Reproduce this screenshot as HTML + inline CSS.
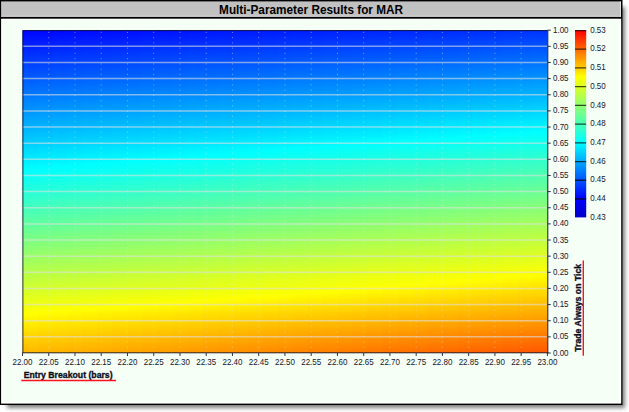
<!DOCTYPE html>
<html><head><meta charset="utf-8"><title>Multi-Parameter Results for MAR</title>
<style>
html,body{margin:0;padding:0;background:#fff;}
body{width:629px;height:412px;overflow:hidden;position:relative;font-family:"Liberation Sans",sans-serif;}
#win{position:absolute;left:0;top:0;width:622px;height:405px;background:#000;box-shadow:5px 5px 4px -2px rgba(0,0,0,0.5);}
svg{position:absolute;left:0;top:0;}
text{font-family:"Liberation Sans",sans-serif;}
</style></head><body>
<div id="win"></div>
<svg width="629" height="412" viewBox="0 0 629 412">
<defs>
<linearGradient id="c0" x1="0" y1="0" x2="0" y2="1"><stop offset="0.0000" stop-color="#0005ff"/><stop offset="0.3150" stop-color="#00bbff"/><stop offset="0.4330" stop-color="#00ffff"/><stop offset="0.4350" stop-color="#01fffe"/><stop offset="0.7550" stop-color="#b9ff46"/><stop offset="0.8775" stop-color="#ffff00"/><stop offset="0.8790" stop-color="#fffe00"/><stop offset="1.0000" stop-color="#ffb600"/></linearGradient>
<linearGradient id="c1" x1="0" y1="0" x2="0" y2="1"><stop offset="0.0000" stop-color="#0006ff"/><stop offset="0.3150" stop-color="#00bdff"/><stop offset="0.4290" stop-color="#00ffff"/><stop offset="0.4350" stop-color="#03fffc"/><stop offset="0.7550" stop-color="#bbff44"/><stop offset="0.8744" stop-color="#ffff00"/><stop offset="0.8790" stop-color="#fffb00"/><stop offset="1.0000" stop-color="#ffb300"/></linearGradient>
<linearGradient id="c2" x1="0" y1="0" x2="0" y2="1"><stop offset="0.0000" stop-color="#0008ff"/><stop offset="0.3150" stop-color="#00bfff"/><stop offset="0.4251" stop-color="#00ffff"/><stop offset="0.4350" stop-color="#05fffa"/><stop offset="0.7550" stop-color="#bdff42"/><stop offset="0.8713" stop-color="#ffff00"/><stop offset="0.8790" stop-color="#fff900"/><stop offset="1.0000" stop-color="#ffb100"/></linearGradient>
<linearGradient id="c3" x1="0" y1="0" x2="0" y2="1"><stop offset="0.0000" stop-color="#0009ff"/><stop offset="0.3150" stop-color="#00c1ff"/><stop offset="0.4212" stop-color="#00ffff"/><stop offset="0.4350" stop-color="#07fff8"/><stop offset="0.7550" stop-color="#bfff40"/><stop offset="0.8681" stop-color="#ffff00"/><stop offset="0.8790" stop-color="#fff600"/><stop offset="1.0000" stop-color="#ffae00"/></linearGradient>
<linearGradient id="c4" x1="0" y1="0" x2="0" y2="1"><stop offset="0.0000" stop-color="#000aff"/><stop offset="0.3150" stop-color="#00c3ff"/><stop offset="0.4173" stop-color="#00ffff"/><stop offset="0.4350" stop-color="#09fff6"/><stop offset="0.7550" stop-color="#c1ff3e"/><stop offset="0.8650" stop-color="#ffff00"/><stop offset="0.8790" stop-color="#fff400"/><stop offset="1.0000" stop-color="#ffab00"/></linearGradient>
<linearGradient id="c5" x1="0" y1="0" x2="0" y2="1"><stop offset="0.0000" stop-color="#000cff"/><stop offset="0.3150" stop-color="#00c5ff"/><stop offset="0.4135" stop-color="#00ffff"/><stop offset="0.4350" stop-color="#0bfff4"/><stop offset="0.7550" stop-color="#c3ff3c"/><stop offset="0.8618" stop-color="#ffff00"/><stop offset="0.8790" stop-color="#fff100"/><stop offset="1.0000" stop-color="#ffa800"/></linearGradient>
<linearGradient id="c6" x1="0" y1="0" x2="0" y2="1"><stop offset="0.0000" stop-color="#000dff"/><stop offset="0.3150" stop-color="#00c7ff"/><stop offset="0.4097" stop-color="#00ffff"/><stop offset="0.4350" stop-color="#0dfff2"/><stop offset="0.7550" stop-color="#c5ff3a"/><stop offset="0.8586" stop-color="#ffff00"/><stop offset="0.8790" stop-color="#ffef00"/><stop offset="1.0000" stop-color="#ffa500"/></linearGradient>
<linearGradient id="c7" x1="0" y1="0" x2="0" y2="1"><stop offset="0.0000" stop-color="#000eff"/><stop offset="0.3150" stop-color="#00c9ff"/><stop offset="0.4059" stop-color="#00ffff"/><stop offset="0.4350" stop-color="#0ffff0"/><stop offset="0.7550" stop-color="#c7ff38"/><stop offset="0.8553" stop-color="#ffff00"/><stop offset="0.8790" stop-color="#ffed00"/><stop offset="1.0000" stop-color="#ffa200"/></linearGradient>
<linearGradient id="c8" x1="0" y1="0" x2="0" y2="1"><stop offset="0.0000" stop-color="#0010ff"/><stop offset="0.3150" stop-color="#00cbff"/><stop offset="0.4022" stop-color="#00ffff"/><stop offset="0.4350" stop-color="#11ffee"/><stop offset="0.7550" stop-color="#c9ff36"/><stop offset="0.8521" stop-color="#ffff00"/><stop offset="0.8790" stop-color="#ffea00"/><stop offset="1.0000" stop-color="#ffa000"/></linearGradient>
<linearGradient id="c9" x1="0" y1="0" x2="0" y2="1"><stop offset="0.0000" stop-color="#0011ff"/><stop offset="0.3150" stop-color="#00cdff"/><stop offset="0.3985" stop-color="#00ffff"/><stop offset="0.4350" stop-color="#13ffec"/><stop offset="0.7550" stop-color="#cbff34"/><stop offset="0.8488" stop-color="#ffff00"/><stop offset="0.8790" stop-color="#ffe800"/><stop offset="1.0000" stop-color="#ff9d00"/></linearGradient>
<linearGradient id="c10" x1="0" y1="0" x2="0" y2="1"><stop offset="0.0000" stop-color="#0012ff"/><stop offset="0.3150" stop-color="#00cfff"/><stop offset="0.3949" stop-color="#00ffff"/><stop offset="0.4350" stop-color="#15ffea"/><stop offset="0.7550" stop-color="#cdff32"/><stop offset="0.8455" stop-color="#ffff00"/><stop offset="0.8790" stop-color="#ffe500"/><stop offset="1.0000" stop-color="#ff9a00"/></linearGradient>
<linearGradient id="c11" x1="0" y1="0" x2="0" y2="1"><stop offset="0.0000" stop-color="#0014ff"/><stop offset="0.3150" stop-color="#00d1ff"/><stop offset="0.3912" stop-color="#00ffff"/><stop offset="0.4350" stop-color="#17ffe8"/><stop offset="0.7550" stop-color="#cfff30"/><stop offset="0.8421" stop-color="#ffff00"/><stop offset="0.8790" stop-color="#ffe300"/><stop offset="1.0000" stop-color="#ff9700"/></linearGradient>
<linearGradient id="c12" x1="0" y1="0" x2="0" y2="1"><stop offset="0.0000" stop-color="#0015ff"/><stop offset="0.3150" stop-color="#00d3ff"/><stop offset="0.3877" stop-color="#00ffff"/><stop offset="0.4350" stop-color="#19ffe6"/><stop offset="0.7550" stop-color="#d1ff2e"/><stop offset="0.8388" stop-color="#ffff00"/><stop offset="0.8790" stop-color="#ffe000"/><stop offset="1.0000" stop-color="#ff9400"/></linearGradient>
<linearGradient id="c13" x1="0" y1="0" x2="0" y2="1"><stop offset="0.0000" stop-color="#0016ff"/><stop offset="0.3150" stop-color="#00d5ff"/><stop offset="0.3841" stop-color="#00ffff"/><stop offset="0.4350" stop-color="#1bffe4"/><stop offset="0.7550" stop-color="#d3ff2c"/><stop offset="0.8354" stop-color="#ffff00"/><stop offset="0.8790" stop-color="#ffde00"/><stop offset="1.0000" stop-color="#ff9100"/></linearGradient>
<linearGradient id="c14" x1="0" y1="0" x2="0" y2="1"><stop offset="0.0000" stop-color="#0018ff"/><stop offset="0.3150" stop-color="#00d6ff"/><stop offset="0.3806" stop-color="#00ffff"/><stop offset="0.4350" stop-color="#1dffe2"/><stop offset="0.7550" stop-color="#d5ff2a"/><stop offset="0.8319" stop-color="#ffff00"/><stop offset="0.8790" stop-color="#ffdb00"/><stop offset="1.0000" stop-color="#ff8f00"/></linearGradient>
<linearGradient id="c15" x1="0" y1="0" x2="0" y2="1"><stop offset="0.0000" stop-color="#0019ff"/><stop offset="0.3150" stop-color="#00d8ff"/><stop offset="0.3771" stop-color="#00ffff"/><stop offset="0.4350" stop-color="#1fffe0"/><stop offset="0.7550" stop-color="#d7ff28"/><stop offset="0.8285" stop-color="#ffff00"/><stop offset="0.8790" stop-color="#ffd900"/><stop offset="1.0000" stop-color="#ff8c00"/></linearGradient>
<linearGradient id="c16" x1="0" y1="0" x2="0" y2="1"><stop offset="0.0000" stop-color="#001aff"/><stop offset="0.3150" stop-color="#00daff"/><stop offset="0.3736" stop-color="#00ffff"/><stop offset="0.4350" stop-color="#21ffde"/><stop offset="0.7550" stop-color="#d9ff26"/><stop offset="0.8250" stop-color="#ffff00"/><stop offset="0.8790" stop-color="#ffd600"/><stop offset="1.0000" stop-color="#ff8900"/></linearGradient>
<linearGradient id="c17" x1="0" y1="0" x2="0" y2="1"><stop offset="0.0000" stop-color="#001cff"/><stop offset="0.3150" stop-color="#00dcff"/><stop offset="0.3702" stop-color="#00ffff"/><stop offset="0.4350" stop-color="#23ffdc"/><stop offset="0.7550" stop-color="#dbff24"/><stop offset="0.8215" stop-color="#ffff00"/><stop offset="0.8790" stop-color="#ffd400"/><stop offset="1.0000" stop-color="#ff8600"/></linearGradient>
<linearGradient id="c18" x1="0" y1="0" x2="0" y2="1"><stop offset="0.0000" stop-color="#001dff"/><stop offset="0.3150" stop-color="#00deff"/><stop offset="0.3668" stop-color="#00ffff"/><stop offset="0.4350" stop-color="#25ffda"/><stop offset="0.7550" stop-color="#ddff22"/><stop offset="0.8180" stop-color="#ffff00"/><stop offset="0.8790" stop-color="#ffd100"/><stop offset="1.0000" stop-color="#ff8300"/></linearGradient>
<linearGradient id="c19" x1="0" y1="0" x2="0" y2="1"><stop offset="0.0000" stop-color="#001eff"/><stop offset="0.3150" stop-color="#00e0ff"/><stop offset="0.3635" stop-color="#00ffff"/><stop offset="0.4350" stop-color="#27ffd8"/><stop offset="0.7550" stop-color="#dfff20"/><stop offset="0.8144" stop-color="#ffff00"/><stop offset="0.8790" stop-color="#ffcf00"/><stop offset="1.0000" stop-color="#ff8000"/></linearGradient>
<linearGradient id="c20" x1="0" y1="0" x2="0" y2="1"><stop offset="0.0000" stop-color="#0020ff"/><stop offset="0.3150" stop-color="#00e2ff"/><stop offset="0.3601" stop-color="#00ffff"/><stop offset="0.4350" stop-color="#29ffd6"/><stop offset="0.7550" stop-color="#e1ff1e"/><stop offset="0.8108" stop-color="#ffff00"/><stop offset="0.8790" stop-color="#ffcd00"/><stop offset="1.0000" stop-color="#ff7e00"/></linearGradient>
<linearGradient id="c21" x1="0" y1="0" x2="0" y2="1"><stop offset="0.0000" stop-color="#0021ff"/><stop offset="0.3150" stop-color="#00e4ff"/><stop offset="0.3568" stop-color="#00ffff"/><stop offset="0.4350" stop-color="#2bffd4"/><stop offset="0.7550" stop-color="#e4ff1b"/><stop offset="0.8072" stop-color="#ffff00"/><stop offset="0.8790" stop-color="#ffca00"/><stop offset="1.0000" stop-color="#ff7b00"/></linearGradient>
<linearGradient id="c22" x1="0" y1="0" x2="0" y2="1"><stop offset="0.0000" stop-color="#0022ff"/><stop offset="0.3150" stop-color="#00e6ff"/><stop offset="0.3536" stop-color="#00ffff"/><stop offset="0.4350" stop-color="#2dffd2"/><stop offset="0.7550" stop-color="#e6ff19"/><stop offset="0.8035" stop-color="#ffff00"/><stop offset="0.8790" stop-color="#ffc800"/><stop offset="1.0000" stop-color="#ff7800"/></linearGradient>
<linearGradient id="c23" x1="0" y1="0" x2="0" y2="1"><stop offset="0.0000" stop-color="#0024ff"/><stop offset="0.3150" stop-color="#00e8ff"/><stop offset="0.3503" stop-color="#00ffff"/><stop offset="0.4350" stop-color="#2fffd0"/><stop offset="0.7550" stop-color="#e8ff17"/><stop offset="0.7998" stop-color="#ffff00"/><stop offset="0.8790" stop-color="#ffc500"/><stop offset="1.0000" stop-color="#ff7500"/></linearGradient>
<linearGradient id="c24" x1="0" y1="0" x2="0" y2="1"><stop offset="0.0000" stop-color="#0025ff"/><stop offset="0.3150" stop-color="#00eaff"/><stop offset="0.3471" stop-color="#00ffff"/><stop offset="0.4350" stop-color="#31ffce"/><stop offset="0.7550" stop-color="#eaff15"/><stop offset="0.7961" stop-color="#ffff00"/><stop offset="0.8790" stop-color="#ffc300"/><stop offset="1.0000" stop-color="#ff7200"/></linearGradient>
<linearGradient id="c25" x1="0" y1="0" x2="0" y2="1"><stop offset="0.0000" stop-color="#0026ff"/><stop offset="0.3150" stop-color="#00ecff"/><stop offset="0.3439" stop-color="#00ffff"/><stop offset="0.4350" stop-color="#33ffcc"/><stop offset="0.7550" stop-color="#ecff13"/><stop offset="0.7923" stop-color="#ffff00"/><stop offset="0.8790" stop-color="#ffc000"/><stop offset="1.0000" stop-color="#ff7000"/></linearGradient>
<linearGradient id="c26" x1="0" y1="0" x2="0" y2="1"><stop offset="0.0000" stop-color="#0028ff"/><stop offset="0.3150" stop-color="#00eeff"/><stop offset="0.3408" stop-color="#00ffff"/><stop offset="0.4350" stop-color="#35ffca"/><stop offset="0.7550" stop-color="#eeff11"/><stop offset="0.7886" stop-color="#ffff00"/><stop offset="0.8790" stop-color="#ffbe00"/><stop offset="1.0000" stop-color="#ff6d00"/></linearGradient>
<linearGradient id="c27" x1="0" y1="0" x2="0" y2="1"><stop offset="0.0000" stop-color="#0029ff"/><stop offset="0.3150" stop-color="#00f0ff"/><stop offset="0.3376" stop-color="#00ffff"/><stop offset="0.4350" stop-color="#37ffc8"/><stop offset="0.7550" stop-color="#f0ff0f"/><stop offset="0.7847" stop-color="#ffff00"/><stop offset="0.8790" stop-color="#ffbb00"/><stop offset="1.0000" stop-color="#ff6a00"/></linearGradient>
<linearGradient id="c28" x1="0" y1="0" x2="0" y2="1"><stop offset="0.0000" stop-color="#002aff"/><stop offset="0.3150" stop-color="#00f2ff"/><stop offset="0.3345" stop-color="#00ffff"/><stop offset="0.4350" stop-color="#39ffc6"/><stop offset="0.7550" stop-color="#f2ff0d"/><stop offset="0.7809" stop-color="#ffff00"/><stop offset="0.8790" stop-color="#ffb900"/><stop offset="1.0000" stop-color="#ff6700"/></linearGradient>
<linearGradient id="c29" x1="0" y1="0" x2="0" y2="1"><stop offset="0.0000" stop-color="#002cff"/><stop offset="0.3150" stop-color="#00f4ff"/><stop offset="0.3315" stop-color="#00ffff"/><stop offset="0.4350" stop-color="#3bffc4"/><stop offset="0.7550" stop-color="#f4ff0b"/><stop offset="0.7770" stop-color="#ffff00"/><stop offset="0.8790" stop-color="#ffb600"/><stop offset="1.0000" stop-color="#ff6400"/></linearGradient>
<linearGradient id="c30" x1="0" y1="0" x2="0" y2="1"><stop offset="0.0000" stop-color="#002dff"/><stop offset="0.3150" stop-color="#00f6ff"/><stop offset="0.3284" stop-color="#00ffff"/><stop offset="0.4350" stop-color="#3dffc2"/><stop offset="0.7550" stop-color="#f6ff09"/><stop offset="0.7731" stop-color="#ffff00"/><stop offset="0.8790" stop-color="#ffb400"/><stop offset="1.0000" stop-color="#ff6100"/></linearGradient>
<linearGradient id="c31" x1="0" y1="0" x2="0" y2="1"><stop offset="0.0000" stop-color="#002eff"/><stop offset="0.3150" stop-color="#00f8ff"/><stop offset="0.3254" stop-color="#00ffff"/><stop offset="0.4350" stop-color="#3fffc0"/><stop offset="0.7550" stop-color="#f8ff07"/><stop offset="0.7691" stop-color="#ffff00"/><stop offset="0.8790" stop-color="#ffb100"/><stop offset="1.0000" stop-color="#ff5f00"/></linearGradient>
<linearGradient id="c32" x1="0" y1="0" x2="0" y2="1"><stop offset="0.0000" stop-color="#0030ff"/><stop offset="0.3150" stop-color="#00faff"/><stop offset="0.3224" stop-color="#00ffff"/><stop offset="0.4350" stop-color="#41ffbe"/><stop offset="0.7550" stop-color="#faff05"/><stop offset="0.7651" stop-color="#ffff00"/><stop offset="0.8790" stop-color="#ffaf00"/><stop offset="1.0000" stop-color="#ff5c00"/></linearGradient>
<linearGradient id="c33" x1="0" y1="0" x2="0" y2="1"><stop offset="0.0000" stop-color="#0031ff"/><stop offset="0.3150" stop-color="#00fcff"/><stop offset="0.3194" stop-color="#00ffff"/><stop offset="0.4350" stop-color="#43ffbc"/><stop offset="0.7550" stop-color="#fcff03"/><stop offset="0.7611" stop-color="#ffff00"/><stop offset="0.8790" stop-color="#ffac00"/><stop offset="1.0000" stop-color="#ff5900"/></linearGradient>
<linearGradient id="c34" x1="0" y1="0" x2="0" y2="1"><stop offset="0.0000" stop-color="#0032ff"/><stop offset="0.3150" stop-color="#00feff"/><stop offset="0.3165" stop-color="#00ffff"/><stop offset="0.4350" stop-color="#45ffba"/><stop offset="0.7550" stop-color="#feff01"/><stop offset="0.7570" stop-color="#ffff00"/><stop offset="0.8790" stop-color="#ffaa00"/><stop offset="1.0000" stop-color="#ff5600"/></linearGradient>
<linearGradient id="gc" x1="0" y1="0" x2="0" y2="1"><stop offset="0.000" stop-color="#ff0000"/><stop offset="0.250" stop-color="#ffff00"/><stop offset="0.600" stop-color="#00ffff"/><stop offset="0.900" stop-color="#0000ff"/><stop offset="1.000" stop-color="#0000c8"/></linearGradient>
</defs>
<rect x="0" y="0" width="622.5" height="405" fill="#000"/>
<rect x="1.1" y="1.4" width="619.9" height="15.4" fill="#c1c1c1"/>
<path d="M1.1 16.3H620.9M620.5 1.4V16.8" stroke="#fff" stroke-opacity="0.55" stroke-width="0.9" fill="none"/>
<rect x="1.1" y="18.7" width="620.1" height="384.9" fill="#fff"/>
<rect x="2.3" y="20" width="617.6" height="382.2" fill="#f5fff5"/>
<text transform="translate(311.05 13.6) scale(1 1.05)" text-anchor="middle" font-size="11.79" font-weight="bold" fill="#000">Multi-Parameter Results for MAR</text>
<rect x="22.50" y="30.2" width="15.60" height="322.80" fill="url(#c0)"/><rect x="37.50" y="30.2" width="15.60" height="322.80" fill="url(#c1)"/><rect x="52.49" y="30.2" width="15.60" height="322.80" fill="url(#c2)"/><rect x="67.49" y="30.2" width="15.60" height="322.80" fill="url(#c3)"/><rect x="82.49" y="30.2" width="15.60" height="322.80" fill="url(#c4)"/><rect x="97.49" y="30.2" width="15.60" height="322.80" fill="url(#c5)"/><rect x="112.48" y="30.2" width="15.60" height="322.80" fill="url(#c6)"/><rect x="127.48" y="30.2" width="15.60" height="322.80" fill="url(#c7)"/><rect x="142.48" y="30.2" width="15.60" height="322.80" fill="url(#c8)"/><rect x="157.47" y="30.2" width="15.60" height="322.80" fill="url(#c9)"/><rect x="172.47" y="30.2" width="15.60" height="322.80" fill="url(#c10)"/><rect x="187.47" y="30.2" width="15.60" height="322.80" fill="url(#c11)"/><rect x="202.47" y="30.2" width="15.60" height="322.80" fill="url(#c12)"/><rect x="217.46" y="30.2" width="15.60" height="322.80" fill="url(#c13)"/><rect x="232.46" y="30.2" width="15.60" height="322.80" fill="url(#c14)"/><rect x="247.46" y="30.2" width="15.60" height="322.80" fill="url(#c15)"/><rect x="262.45" y="30.2" width="15.60" height="322.80" fill="url(#c16)"/><rect x="277.45" y="30.2" width="15.60" height="322.80" fill="url(#c17)"/><rect x="292.45" y="30.2" width="15.60" height="322.80" fill="url(#c18)"/><rect x="307.45" y="30.2" width="15.60" height="322.80" fill="url(#c19)"/><rect x="322.44" y="30.2" width="15.60" height="322.80" fill="url(#c20)"/><rect x="337.44" y="30.2" width="15.60" height="322.80" fill="url(#c21)"/><rect x="352.44" y="30.2" width="15.60" height="322.80" fill="url(#c22)"/><rect x="367.43" y="30.2" width="15.60" height="322.80" fill="url(#c23)"/><rect x="382.43" y="30.2" width="15.60" height="322.80" fill="url(#c24)"/><rect x="397.43" y="30.2" width="15.60" height="322.80" fill="url(#c25)"/><rect x="412.43" y="30.2" width="15.60" height="322.80" fill="url(#c26)"/><rect x="427.42" y="30.2" width="15.60" height="322.80" fill="url(#c27)"/><rect x="442.42" y="30.2" width="15.60" height="322.80" fill="url(#c28)"/><rect x="457.42" y="30.2" width="15.60" height="322.80" fill="url(#c29)"/><rect x="472.41" y="30.2" width="15.60" height="322.80" fill="url(#c30)"/><rect x="487.41" y="30.2" width="15.60" height="322.80" fill="url(#c31)"/><rect x="502.41" y="30.2" width="15.60" height="322.80" fill="url(#c32)"/><rect x="517.41" y="30.2" width="15.60" height="322.80" fill="url(#c33)"/><rect x="532.40" y="30.2" width="15.00" height="322.80" fill="url(#c34)"/>
<path d="M48.74 31.8V353.0M74.99 31.8V353.0M101.23 31.8V353.0M127.48 31.8V353.0M153.72 31.8V353.0M179.97 31.8V353.0M206.21 31.8V353.0M232.46 31.8V353.0M258.70 31.8V353.0M284.95 31.8V353.0M311.19 31.8V353.0M337.44 31.8V353.0M363.69 31.8V353.0M389.93 31.8V353.0M416.18 31.8V353.0M442.42 31.8V353.0M468.66 31.8V353.0M494.91 31.8V353.0M521.15 31.8V353.0" stroke="#e4e4ec" stroke-opacity="0.45" stroke-width="1" stroke-dasharray="1.2 4.05" fill="none"/>
<path d="M22.5 46.34H547.4M22.5 62.48H547.4M22.5 78.62H547.4M22.5 94.76H547.4M22.5 110.90H547.4M22.5 127.04H547.4M22.5 143.18H547.4M22.5 159.32H547.4M22.5 175.46H547.4M22.5 191.60H547.4M22.5 207.74H547.4M22.5 223.88H547.4M22.5 240.02H547.4M22.5 256.16H547.4M22.5 272.30H547.4M22.5 288.44H547.4M22.5 304.58H547.4M22.5 320.72H547.4M22.5 336.86H547.4" stroke="#e0e0e0" stroke-opacity="0.58" stroke-width="1.5" fill="none"/>
<path d="M22.9 353.0V30.599999999999998H547.4" stroke="#05051e" stroke-opacity="0.9" stroke-width="0.9" fill="none"/>
<path d="M547.8 30.2V353.3" stroke="#06061c" stroke-width="0.95" fill="none"/><path d="M22.5 352.8H548.3" stroke="#15152d" stroke-width="0.9" fill="none"/>
<path d="M22.50 353.0v3M48.74 353.0v3M74.99 353.0v3M101.23 353.0v3M127.48 353.0v3M153.72 353.0v3M179.97 353.0v3M206.21 353.0v3M232.46 353.0v3M258.70 353.0v3M284.95 353.0v3M311.19 353.0v3M337.44 353.0v3M363.69 353.0v3M389.93 353.0v3M416.18 353.0v3M442.42 353.0v3M468.66 353.0v3M494.91 353.0v3M521.15 353.0v3M547.40 353.0v3" stroke="#262640" stroke-width="0.95" fill="none"/>
<g font-size="8.7" fill="#15152d"><text transform="translate(22.50 364.8) scale(.92 1)" text-anchor="middle">22.00</text><text transform="translate(48.74 364.8) scale(.92 1)" text-anchor="middle">22.05</text><text transform="translate(74.99 364.8) scale(.92 1)" text-anchor="middle">22.10</text><text transform="translate(101.23 364.8) scale(.92 1)" text-anchor="middle">22.15</text><text transform="translate(127.48 364.8) scale(.92 1)" text-anchor="middle">22.20</text><text transform="translate(153.72 364.8) scale(.92 1)" text-anchor="middle">22.25</text><text transform="translate(179.97 364.8) scale(.92 1)" text-anchor="middle">22.30</text><text transform="translate(206.21 364.8) scale(.92 1)" text-anchor="middle">22.35</text><text transform="translate(232.46 364.8) scale(.92 1)" text-anchor="middle">22.40</text><text transform="translate(258.70 364.8) scale(.92 1)" text-anchor="middle">22.45</text><text transform="translate(284.95 364.8) scale(.92 1)" text-anchor="middle">22.50</text><text transform="translate(311.19 364.8) scale(.92 1)" text-anchor="middle">22.55</text><text transform="translate(337.44 364.8) scale(.92 1)" text-anchor="middle">22.60</text><text transform="translate(363.69 364.8) scale(.92 1)" text-anchor="middle">22.65</text><text transform="translate(389.93 364.8) scale(.92 1)" text-anchor="middle">22.70</text><text transform="translate(416.18 364.8) scale(.92 1)" text-anchor="middle">22.75</text><text transform="translate(442.42 364.8) scale(.92 1)" text-anchor="middle">22.80</text><text transform="translate(468.66 364.8) scale(.92 1)" text-anchor="middle">22.85</text><text transform="translate(494.91 364.8) scale(.92 1)" text-anchor="middle">22.90</text><text transform="translate(521.15 364.8) scale(.92 1)" text-anchor="middle">22.95</text><text transform="translate(547.40 364.8) scale(.92 1)" text-anchor="middle">23.00</text></g>
<path d="M547.4 30.20h3.4M547.4 46.34h3.4M547.4 62.48h3.4M547.4 78.62h3.4M547.4 94.76h3.4M547.4 110.90h3.4M547.4 127.04h3.4M547.4 143.18h3.4M547.4 159.32h3.4M547.4 175.46h3.4M547.4 191.60h3.4M547.4 207.74h3.4M547.4 223.88h3.4M547.4 240.02h3.4M547.4 256.16h3.4M547.4 272.30h3.4M547.4 288.44h3.4M547.4 304.58h3.4M547.4 320.72h3.4M547.4 336.86h3.4M547.4 353.00h3.4" stroke="#262640" stroke-width="0.95" fill="none"/>
<g font-size="8.7" fill="#15152d"><text transform="translate(553 32.70) scale(.92 1)">1.00</text><text transform="translate(553 48.84) scale(.92 1)">0.95</text><text transform="translate(553 64.98) scale(.92 1)">0.90</text><text transform="translate(553 81.12) scale(.92 1)">0.85</text><text transform="translate(553 97.26) scale(.92 1)">0.80</text><text transform="translate(553 113.40) scale(.92 1)">0.75</text><text transform="translate(553 129.54) scale(.92 1)">0.70</text><text transform="translate(553 145.68) scale(.92 1)">0.65</text><text transform="translate(553 161.82) scale(.92 1)">0.60</text><text transform="translate(553 177.96) scale(.92 1)">0.55</text><text transform="translate(553 194.10) scale(.92 1)">0.50</text><text transform="translate(553 210.24) scale(.92 1)">0.45</text><text transform="translate(553 226.38) scale(.92 1)">0.40</text><text transform="translate(553 242.52) scale(.92 1)">0.35</text><text transform="translate(553 258.66) scale(.92 1)">0.30</text><text transform="translate(553 274.80) scale(.92 1)">0.25</text><text transform="translate(553 290.94) scale(.92 1)">0.20</text><text transform="translate(553 307.08) scale(.92 1)">0.15</text><text transform="translate(553 323.22) scale(.92 1)">0.10</text><text transform="translate(553 339.36) scale(.92 1)">0.05</text><text transform="translate(553 355.50) scale(.92 1)">0.00</text></g>
<rect x="575.0" y="30.2" width="11.2" height="187.2" fill="url(#gc)"/>
<path d="M575.0 30.65H586.2M575.0 49.22H586.2M575.0 67.94H586.2M575.0 86.66H586.2M575.0 105.38H586.2M575.0 124.10H586.2M575.0 142.82H586.2M575.0 161.54H586.2M575.0 180.26H586.2M575.0 198.98H586.2" stroke="#000" stroke-opacity="0.7" stroke-width="1.3" fill="none"/>
<g font-size="8.7" fill="#15152d"><text transform="translate(590.2 32.70) scale(.92 1)">0.53</text><text transform="translate(590.2 51.42) scale(.92 1)">0.52</text><text transform="translate(590.2 70.14) scale(.92 1)">0.51</text><text transform="translate(590.2 88.86) scale(.92 1)">0.50</text><text transform="translate(590.2 107.58) scale(.92 1)">0.49</text><text transform="translate(590.2 126.30) scale(.92 1)">0.48</text><text transform="translate(590.2 145.02) scale(.92 1)">0.47</text><text transform="translate(590.2 163.74) scale(.92 1)">0.46</text><text transform="translate(590.2 182.46) scale(.92 1)">0.45</text><text transform="translate(590.2 201.18) scale(.92 1)">0.44</text><text transform="translate(590.2 219.90) scale(.92 1)">0.43</text></g>
<text transform="translate(23.7 377.6) scale(1.075 1.1)" font-size="8.1" font-weight="bold" fill="#0c0c1c" stroke="#0c0c1c" stroke-width="0.3">Entry Breakout (bars)</text>
<path d="M21.3 380.6H116" stroke="#ff1020" stroke-width="1.5"/>
<text transform="translate(581 351.8) rotate(-90) scale(1.075 1.1)" font-size="8.1" font-weight="bold" fill="#0c0c1c" stroke="#0c0c1c" stroke-width="0.3">Trade Always on Tick</text>
<path d="M583.3 260.5V355.7" stroke="#ff1020" stroke-width="1.4"/>
</svg>
</body></html>
